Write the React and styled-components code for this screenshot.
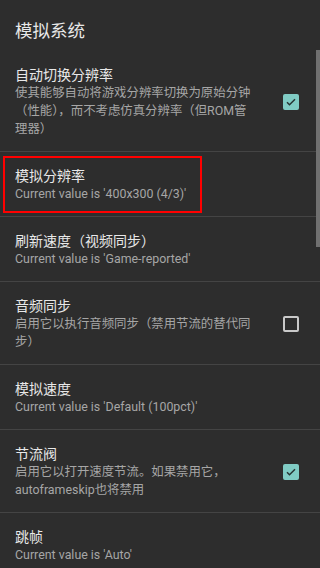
import React from "react";
import styled, { createGlobalStyle } from "styled-components";

const Global = createGlobalStyle`
  html, body { margin: 0; padding: 0; background: #2d2d2d; }
  body { font-family: Roboto, "Noto Sans CJK SC", sans-serif; -webkit-font-smoothing: antialiased; }
  * { box-sizing: border-box; }
`;

const Screen = styled.div`
  width: 320px;
  height: 568px;
  overflow: hidden;
  background: #2d2d2d;
  position: relative;
`;

const Category = styled.div`
  padding: 21px 15px 10px;
  font-size: 17.5px;
  line-height: 20px;
  color: #e8e8e8;
`;

const List = styled.div`
  display: flex;
  flex-direction: column;
`;

const Row = styled.div`
  position: relative;
  display: flex;
  align-items: center;
  padding: 15px 0 13px 15px;
  border-top: ${(p) => (p.$first ? "none" : "1px solid #444444")};
`;

const Texts = styled.div`
  width: 241px;
  display: flex;
  flex-direction: column;
`;

const Title = styled.div`
  font-size: 14px;
  line-height: 18px;
  color: #e8e8e8;
`;

const Summary = styled.div`
  font-size: 12.4px;
  line-height: 18px;
  color: #a6a6a6;
`;

const Widget = styled.div`
  margin-left: 27px;
  width: 16px;
  height: 16px;
  display: flex;
  align-items: center;
  justify-content: center;
  border-radius: 2px;
  background: ${(p) => (p.$checked ? "#80cbc4" : "transparent")};
  border: ${(p) => (p.$checked ? "none" : "2px solid #c9c9c9")};
`;

const Highlight = styled.div`
  position: absolute;
  top: 4px;
  left: 3px;
  width: 199px;
  height: 57px;
  border: 2px solid #ff0000;
  pointer-events: none;
`;

const ScrollThumb = styled.div`
  position: absolute;
  top: 50px;
  right: 0;
  width: 4px;
  height: 197px;
  background: #707070;
`;

const Check = () => (
  <svg width="12" height="12" viewBox="0 0 24 24">
    <path d="M4 12.5l5 5L20 6.5" fill="none" stroke="#263433" strokeWidth="3" />
  </svg>
);

const items = [
  { title: "自动切换分辨率", summary: "使其能够自动将游戏分辨率切换为原始分钟（性能），而不考虑仿真分辨率（但ROM管理器）", checkbox: true, checked: true },
  { title: "模拟分辨率", summary: "Current value is '400x300 (4/3)'", highlight: true },
  { title: "刷新速度（视频同步）", summary: "Current value is 'Game-reported'" },
  { title: "音频同步", summary: "启用它以执行音频同步（禁用节流的替代同步）", checkbox: true, checked: false },
  { title: "模拟速度", summary: "Current value is 'Default (100pct)'" },
  { title: "节流阀", summary: "启用它以打开速度节流。如果禁用它，autoframeskip也将禁用", checkbox: true, checked: true },
  { title: "跳帧", summary: "Current value is 'Auto'" },
];

export default function App() {
  return (
    <Screen>
      <Global />
      <Category>模拟系统</Category>
      <List>
        {items.map((it, i) => (
          <Row key={i} $first={i === 0}>
            <Texts>
              <Title>{it.title}</Title>
              <Summary>{it.summary}</Summary>
            </Texts>
            {it.checkbox && (
              <Widget $checked={it.checked}>{it.checked && <Check />}</Widget>
            )}
            {it.highlight && <Highlight />}
          </Row>
        ))}
      </List>
      <ScrollThumb />
    </Screen>
  );
}
